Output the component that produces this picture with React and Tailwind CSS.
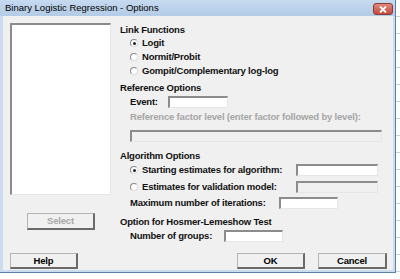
import React from "react";

const sunken = "border-t-2 border-l-2 border-t-[#8c8c8c] border-l-[#8c8c8c] border-b border-r border-b-[#e6e6e6] border-r-[#e6e6e6]";
const raised = "border-t border-l border-t-[#b4b4b4] border-l-[#b4b4b4] border-b-2 border-r-2 border-b-[#6a6a6a] border-r-[#6a6a6a] bg-[#f0f0f0]";

const Dot = ({ checked }) => (
  <span className="w-[8px] h-[8px] rounded-full bg-white border border-t-[#8a8a8a] border-l-[#8a8a8a] border-b-[#dcdcdc] border-r-[#dcdcdc] flex items-center justify-center">
    {checked && <span className="w-[3px] h-[3px] rounded-full bg-[#222]" />}
  </span>
);

const Radio = ({ checked, label }) => (
  <div className="h-[14px] flex items-center pl-[10px]">
    <Dot checked={checked} />
    <span className="ml-[4px]">{label}</span>
  </div>
);

const Field = ({ w, disabled }) => (
  <div className={`h-[12px] ${sunken} ${disabled ? "bg-[#f0f0f0]" : "bg-white"}`} style={{ width: w }} />
);

const Button = ({ children, disabled, w = 68, h = 16 }) => (
  <div
    className={`${raised} flex items-center justify-center ${disabled ? "text-[#a8a8a8]" : "text-black"}`}
    style={{ width: w, height: h }}
  >
    {children}
  </div>
);

export default function App() {
  return (
    <div className="w-[400px] h-[279px] bg-white bg-[repeating-linear-gradient(to_bottom,#ffffff_0px,#ffffff_16px,#cfcfcf_16px,#cfcfcf_17px)] overflow-hidden font-['Liberation_Sans',Arial,sans-serif]">
      <div className="w-[396px] h-[273px] bg-[#cbdcef] border-r border-b border-[#5b82ad] flex flex-col">
        {/* title bar */}
        <div className="h-[16px] flex items-center justify-between pl-[5px] pr-[2px] bg-gradient-to-b from-[#c6daf0] to-[#b3cbe6]">
          <span className="text-[9.5px] text-black leading-none">Binary Logistic Regression - Options</span>
          <div className="w-[20px] h-[12px] mt-[2px] rounded-[3px] border border-[#8e3a34] bg-gradient-to-b from-[#e0877c] to-[#c24a3c] flex items-center justify-center">
            <svg width="8" height="7" viewBox="0 0 8 7">
              <path d="M1 0.5 L7 6.5 M7 0.5 L1 6.5" stroke="#fff" strokeWidth="1.8" />
            </svg>
          </div>
        </div>

        {/* body */}
        <div className="flex-1 ml-[3px] mr-[2px] mb-[2px] bg-[#f0f0f0] pl-[7px] pt-[7px] text-[9.5px] font-bold tracking-[-0.2px] text-[#111] leading-none flex flex-col">
          <div className="flex h-[220px]">
            {/* left column */}
            <div className="w-[101px] flex flex-col">
              <div className={`h-[172px] bg-white ${sunken}`} />
              <div className="mt-[18px] ml-[17px]">
                <Button disabled h={17}>Select</Button>
              </div>
            </div>

            {/* right column */}
            <div className="ml-[9px] w-[262px] flex flex-col">
              <div className="h-[13px] flex items-center">Link Functions</div>
              <Radio checked label="Logit" />
              <Radio label="Normit/Probit" />
              <Radio label="Gompit/Complementary log-log" />

              <div className="h-[14px] mt-[3px] flex items-center">Reference Options</div>
              <div className="h-[14px] flex items-center pl-[10px]">
                <span className="w-[38px]">Event:</span>
                <Field w={60} />
              </div>
              <div className="h-[14px] mt-[1px] flex items-center pl-[10px] text-[#a6a6a6]">
                Reference factor level (enter factor followed by level):
              </div>
              <div className="mt-[6px] pl-[10px]">
                <Field w={252} disabled />
              </div>

              <div className="h-[14px] mt-[7px] flex items-center">Algorithm Options</div>
              <div className="h-[14px] flex items-center pl-[10px]">
                <Dot checked />
                <span className="ml-[4px] w-[154px]">Starting estimates for algorithm:</span>
                <Field w={82} />
              </div>
              <div className="h-[14px] mt-[3px] flex items-center pl-[10px]">
                <Dot />
                <span className="ml-[4px] w-[154px]">Estimates for validation model:</span>
                <Field w={82} disabled />
              </div>
              <div className="h-[14px] mt-[2px] flex items-center pl-[10px]">
                <span className="w-[149px]">Maximum number of iterations:</span>
                <Field w={59} />
              </div>

              <div className="h-[14px] mt-[5px] flex items-center">Option for Hosmer-Lemeshow Test</div>
              <div className="h-[14px] flex items-center pl-[10px]">
                <span className="w-[94px]">Number of groups:</span>
                <Field w={59} />
              </div>
            </div>
          </div>

          {/* bottom buttons */}
          <div className="mt-[10px] flex">
            <Button>Help</Button>
            <div className="ml-[159px]">
              <Button>OK</Button>
            </div>
            <div className="ml-[13px]">
              <Button w={69}>Cancel</Button>
            </div>
          </div>
        </div>
      </div>
    </div>
  );
}
